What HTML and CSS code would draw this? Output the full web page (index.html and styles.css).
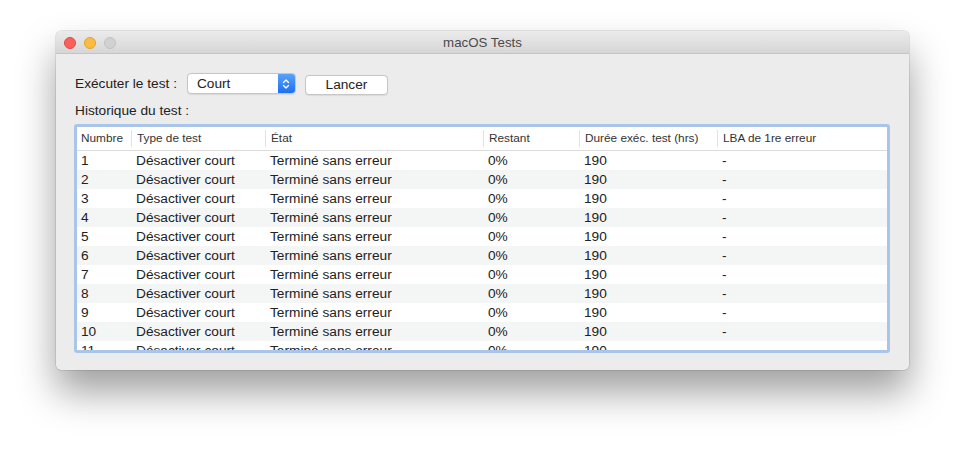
FILE: index.html
```html
<!DOCTYPE html>
<html lang="fr">
<head>
<meta charset="utf-8">
<title>macOS Tests</title>
<link rel="stylesheet" href="styles.css">
</head>
<body>
<div class="window">
  <div class="titlebar">
    <div class="lights">
      <span class="light red"></span>
      <span class="light yellow"></span>
      <span class="light grey"></span>
    </div>
    <div class="title">macOS Tests</div>
  </div>
  <div class="content">
    <div class="controls">
      <span class="label">Exécuter le test :</span>
      <div class="popup">
        <span class="popup-text">Court</span>
        <span class="stepper">
          <svg width="8" height="12" viewBox="0 0 8 12"><path d="M1.5 4.5 L4 2 L6.5 4.5 M1.5 7.5 L4 10 L6.5 7.5" fill="none" stroke="#fff" stroke-width="1.3" stroke-linecap="round" stroke-linejoin="round"/></svg>
        </span>
      </div>
      <div class="button">Lancer</div>
    </div>
    <div class="section-label">Historique du test :</div>
    <div class="table-ring">
      <div class="table">
        <div class="row head">
          <div class="cell">Numbre</div>
          <div class="cell sep">Type de test</div>
          <div class="cell sep">État</div>
          <div class="cell sep">Restant</div>
          <div class="cell sep">Durée exéc. test (hrs)</div>
          <div class="cell sep">LBA de 1re erreur</div>
        </div>
        <div class="body">
          <div class="row"><div class="cell">1</div><div class="cell">Désactiver court</div><div class="cell">Terminé sans erreur</div><div class="cell">0%</div><div class="cell">190</div><div class="cell">-</div></div>
          <div class="row"><div class="cell">2</div><div class="cell">Désactiver court</div><div class="cell">Terminé sans erreur</div><div class="cell">0%</div><div class="cell">190</div><div class="cell">-</div></div>
          <div class="row"><div class="cell">3</div><div class="cell">Désactiver court</div><div class="cell">Terminé sans erreur</div><div class="cell">0%</div><div class="cell">190</div><div class="cell">-</div></div>
          <div class="row"><div class="cell">4</div><div class="cell">Désactiver court</div><div class="cell">Terminé sans erreur</div><div class="cell">0%</div><div class="cell">190</div><div class="cell">-</div></div>
          <div class="row"><div class="cell">5</div><div class="cell">Désactiver court</div><div class="cell">Terminé sans erreur</div><div class="cell">0%</div><div class="cell">190</div><div class="cell">-</div></div>
          <div class="row"><div class="cell">6</div><div class="cell">Désactiver court</div><div class="cell">Terminé sans erreur</div><div class="cell">0%</div><div class="cell">190</div><div class="cell">-</div></div>
          <div class="row"><div class="cell">7</div><div class="cell">Désactiver court</div><div class="cell">Terminé sans erreur</div><div class="cell">0%</div><div class="cell">190</div><div class="cell">-</div></div>
          <div class="row"><div class="cell">8</div><div class="cell">Désactiver court</div><div class="cell">Terminé sans erreur</div><div class="cell">0%</div><div class="cell">190</div><div class="cell">-</div></div>
          <div class="row"><div class="cell">9</div><div class="cell">Désactiver court</div><div class="cell">Terminé sans erreur</div><div class="cell">0%</div><div class="cell">190</div><div class="cell">-</div></div>
          <div class="row"><div class="cell">10</div><div class="cell">Désactiver court</div><div class="cell">Terminé sans erreur</div><div class="cell">0%</div><div class="cell">190</div><div class="cell">-</div></div>
          <div class="row"><div class="cell">11</div><div class="cell">Désactiver court</div><div class="cell">Terminé sans erreur</div><div class="cell">0%</div><div class="cell">190</div><div class="cell">-</div></div>
        </div>
      </div>
    </div>
  </div>
</div>
</body>
</html>
```
FILE: styles.css
```css
* { box-sizing: border-box; }
html, body {
  margin: 0;
  padding: 0;
  background: #ffffff;
  font-family: "Liberation Sans", Arial, sans-serif;
  color: #222;
}
body {
  padding: 31px 0 0 56px;
  height: 450px;
  overflow: hidden;
}
.window {
  width: 853px;
  height: 339px;
  background: #ececec;
  border-radius: 5px;
  box-shadow: 0 22px 38px rgba(0, 0, 0, 0.38), 0 0 0 0.5px rgba(0, 0, 0, 0.18);
  display: flex;
  flex-direction: column;
  overflow: hidden;
}
.titlebar {
  height: 23px;
  flex: 0 0 23px;
  background: linear-gradient(#ebebeb, #d6d6d6);
  border-bottom: 1px solid #c4c4c4;
  display: flex;
  align-items: center;
  position: relative;
}
.lights {
  display: flex;
  gap: 8px;
  padding-left: 8px;
  position: absolute;
  left: 0;
  top: 6px;
}
.light {
  width: 12px;
  height: 12px;
  border-radius: 50%;
  display: block;
}
.red { background: #fc605c; border: 0.5px solid #de4a46; }
.yellow { background: #fdbc40; border: 0.5px solid #dea236; }
.grey { background: #d1d1d1; border: 0.5px solid #c2c2c2; }
.title {
  flex: 1;
  text-align: center;
  font-size: 13.3px;
  color: #4a4a4a;
  padding-left: 0;
}
.content {
  flex: 1;
  padding: 19px 19px 0 18px;
  display: flex;
  flex-direction: column;
}
.controls {
  display: flex;
  align-items: center;
  height: 21px;
  padding-left: 1px;
}
.label {
  font-size: 13.7px;
  color: #222;
  margin-right: 10px;
}
.popup {
  width: 109px;
  height: 21px;
  background: #fff;
  border: 1px solid #c6c6c6;
  border-radius: 4px;
  display: flex;
  align-items: stretch;
  overflow: hidden;
  box-shadow: 0 0.5px 1px rgba(0,0,0,0.08);
}
.popup-text {
  flex: 1;
  font-size: 13.7px;
  padding-left: 9px;
  line-height: 19px;
  color: #222;
}
.stepper {
  width: 17px;
  background: linear-gradient(#5aa2f8, #1d6ff0);
  display: flex;
  align-items: center;
  justify-content: center;
}
.button {
  margin-left: 9px;
  margin-top: 3px;
  width: 83px;
  height: 20px;
  background: #fff;
  border: 1px solid #c6c6c6;
  border-radius: 4px;
  font-size: 13.7px;
  line-height: 18px;
  text-align: center;
  color: #222;
  box-shadow: 0 0.5px 1px rgba(0,0,0,0.08);
}
.section-label {
  font-size: 13.7px;
  margin-top: 9px;
  padding-left: 1px;
  line-height: 16px;
  color: #222;
}
.table-ring {
  margin-top: 5px;
  height: 229px;
  flex: 0 0 229px;
  min-height: 0;
  border: 3px solid #a9c6ea;
  border-radius: 3px;
  background: #fff;
  overflow: hidden;
}
.table {
  height: 100%;
  display: flex;
  flex-direction: column;
  overflow: hidden;
}
.row {
  display: grid;
  grid-template-columns: 54px 134px 218px 96px 138px 1fr;
  height: 19px;
  flex: 0 0 19px;
  align-items: center;
  font-size: 13.7px;
  color: #222;
}
.row .cell { padding-left: 5px; white-space: nowrap; overflow: hidden; }
.row .cell:first-child { padding-left: 4px; }
.head {
  height: 24px;
  flex: 0 0 24px;
  font-size: 11.8px;
  color: #333;
  border-bottom: 1px solid #dcdcdc;
}
.head .cell { height: 17px; line-height: 17px; }
.head .sep { border-left: 1px solid #e2e2e2; }
.body { flex: 1; min-height: 0; overflow: hidden; }
.body .row:nth-child(even) { background: #f4f5f5; }
```
